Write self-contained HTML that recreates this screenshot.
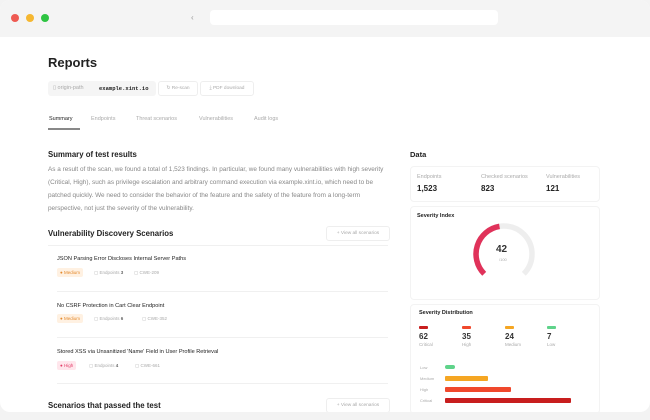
<!DOCTYPE html>
<html><head><meta charset="utf-8"><style>
*{box-sizing:border-box;margin:0;padding:0}
body{width:650px;height:420px;background:#f3f3f3;font-family:"Liberation Sans",sans-serif;position:relative;overflow:hidden;color:#222}
.a{position:absolute;white-space:nowrap}
.win{position:absolute;left:0;top:0;width:650px;height:412px;background:#fff;border-radius:10px;overflow:hidden}
.bar{position:absolute;left:0;top:0;width:650px;height:37px;background:#f4f4f4}
.dot{position:absolute;top:14px;width:8px;height:8px;border-radius:50%}
.g{color:#aaa}
.t{font-size:5.5px}
.tag{position:absolute;height:9px;font-size:4.5px;line-height:9px;padding:0 3px;border-radius:2px}
.line{position:absolute;height:1px;background:#f0f0f0}
.card{position:absolute;border:1px solid #f3f3f3;border-radius:4px}
.btn{position:absolute;border:1px solid #eee;border-radius:3px;font-size:4.8px;color:#aaa;line-height:13px;text-align:center}
</style></head><body>
<div class="win">
<div class="bar"></div>
<div class="dot" style="left:11px;background:#ee5a52"></div>
<div class="dot" style="left:26px;background:#f5b731"></div>
<div class="dot" style="left:41px;background:#2ec442"></div>
<div class="a" style="left:191px;top:13px;font-size:8px;color:#999">‹</div>
<div class="a" style="left:210px;top:10px;width:288px;height:15px;background:#fff;border-radius:4px"></div>

<div class="a" style="left:48px;top:55px;font-size:13px;font-weight:bold">Reports</div>
<div class="a" style="left:48px;top:81px;width:108px;height:15px;background:#f5f5f5;border-radius:3px"></div>
<div class="a t g" style="left:53px;top:85px">▯ origin-path</div>
<div class="a" style="left:99px;top:85px;font-size:5.5px;font-family:'Liberation Mono',monospace;font-weight:bold">example.xint.io</div>
<div class="btn" style="left:158px;top:81px;width:40px;height:15px">↻ Re-scan</div>
<div class="btn" style="left:200px;top:81px;width:54px;height:15px">⤓ PDF download</div>

<div class="a t" style="left:49px;top:116px">Summary</div>
<div class="a t g" style="left:91px;top:116px">Endpoints</div>
<div class="a t g" style="left:136px;top:116px">Threat scenarios</div>
<div class="a t g" style="left:199px;top:116px">Vulnerabilities</div>
<div class="a t g" style="left:254px;top:116px">Audit logs</div>
<div class="a" style="left:48px;top:128px;width:32px;height:1.5px;background:#888"></div>

<div class="a" style="left:48px;top:150px;font-size:7.8px;font-weight:bold">Summary of test results</div>
<div class="a" style="left:48px;top:163px;font-size:6.4px;line-height:13px;color:#888">As a result of the scan, we found a total of 1,523 findings. In particular, we found many vulnerabilities with high severity<br>(Critical, High), such as privilege escalation and arbitrary command execution via example.xint.io, which need to be<br>patched quickly. We need to consider the behavior of the feature and the safety of the feature from a long-term<br>perspective, not just the severity of the vulnerability.</div>

<div class="a" style="left:48px;top:229px;font-size:7.8px;font-weight:bold">Vulnerability Discovery Scenarios</div>
<div class="btn" style="left:326px;top:226px;width:64px;height:15px">+ View all scenarios</div>
<div class="line" style="left:48px;top:245px;width:340px"></div>

<div class="a" style="left:57px;top:256px;font-size:5.6px">JSON Parsing Error Discloses Internal Server Paths</div>
<div class="tag" style="left:57px;top:268px;background:#fff1e2;color:#e48a2d">● Medium</div>
<div class="a g" style="left:94px;top:270px;font-size:4.5px">▢ Endpoints <b style="color:#666">3</b></div>
<div class="a g" style="left:134px;top:270px;font-size:4.5px">▢ CWE-209</div>
<div class="line" style="left:57px;top:291px;width:331px"></div>

<div class="a" style="left:57px;top:303px;font-size:5.6px">No CSRF Protection in Cart Clear Endpoint</div>
<div class="tag" style="left:57px;top:314px;background:#fff1e2;color:#e48a2d">● Medium</div>
<div class="a g" style="left:94px;top:316px;font-size:4.5px">▢ Endpoints <b style="color:#666">6</b></div>
<div class="a g" style="left:142px;top:316px;font-size:4.5px">▢ CWE-352</div>
<div class="line" style="left:57px;top:337px;width:331px"></div>

<div class="a" style="left:57px;top:349px;font-size:5.6px">Stored XSS via Unsanitized 'Name' Field in User Profile Retrieval</div>
<div class="tag" style="left:57px;top:361px;background:#ffe6ec;color:#e33a66">● High</div>
<div class="a g" style="left:89px;top:363px;font-size:4.5px">▢ Endpoints <b style="color:#666">4</b></div>
<div class="a g" style="left:135px;top:363px;font-size:4.5px">▢ CWE-661</div>
<div class="line" style="left:57px;top:383px;width:331px"></div>

<div class="a" style="left:48px;top:401px;font-size:7.8px;font-weight:bold">Scenarios that passed the test</div>
<div class="btn" style="left:326px;top:398px;width:64px;height:15px">+ View all scenarios</div>

<div class="a" style="left:410px;top:150px;font-size:7.5px;font-weight:bold">Data</div>
<div class="card" style="left:410px;top:166px;width:190px;height:36px"></div>
<div class="a t g" style="left:417px;top:174px">Endpoints</div>
<div class="a" style="left:417px;top:184px;font-size:8px;font-weight:bold">1,523</div>
<div class="a t g" style="left:481px;top:174px">Checked scenarios</div>
<div class="a" style="left:481px;top:184px;font-size:8px;font-weight:bold">823</div>
<div class="a t g" style="left:546px;top:174px">Vulnerabilities</div>
<div class="a" style="left:546px;top:184px;font-size:8px;font-weight:bold">121</div>

<div class="card" style="left:410px;top:206px;width:190px;height:94px"></div>
<div class="a" style="left:417px;top:213px;font-size:5.5px;font-weight:bold">Severity Index</div>
<svg class="a" style="left:472px;top:222px" width="64" height="64" viewBox="0 0 64 64">
<path d="M12.2 51.8 A28 28 0 1 1 51.8 51.8" fill="none" stroke="#eee" stroke-width="5.5"/>
<path d="M12.2 51.8 A28 28 0 0 1 27.5 4.4" fill="none" stroke="#e0325a" stroke-width="5.5"/>
</svg>
<div class="a" style="left:496px;top:244px;font-size:10px;font-weight:bold;color:#333">42</div>
<div class="a g" style="left:499px;top:257px;font-size:4px">/100</div>

<div class="card" style="left:410px;top:304px;width:190px;height:110px"></div>
<div class="a" style="left:419px;top:310px;font-size:5.5px;font-weight:bold">Severity Distribution</div>
<div class="a" style="left:419px;top:326px;width:9px;height:3px;background:#c81e1e;border-radius:1px"></div>
<div class="a" style="left:462px;top:326px;width:9px;height:3px;background:#f0482c;border-radius:1px"></div>
<div class="a" style="left:505px;top:326px;width:9px;height:3px;background:#f5a623;border-radius:1px"></div>
<div class="a" style="left:547px;top:326px;width:9px;height:3px;background:#5fd38a;border-radius:1px"></div>
<div class="a" style="left:419px;top:332px;font-size:8px;font-weight:bold;color:#333">62</div>
<div class="a" style="left:462px;top:332px;font-size:8px;font-weight:bold;color:#333">35</div>
<div class="a" style="left:505px;top:332px;font-size:8px;font-weight:bold;color:#333">24</div>
<div class="a" style="left:547px;top:332px;font-size:8px;font-weight:bold;color:#333">7</div>
<div class="a g" style="left:419px;top:342px;font-size:4.5px">Critical</div>
<div class="a g" style="left:462px;top:342px;font-size:4.5px">High</div>
<div class="a g" style="left:505px;top:342px;font-size:4.5px">Medium</div>
<div class="a g" style="left:547px;top:342px;font-size:4.5px">Low</div>
<div class="a g" style="left:420px;top:365px;font-size:4px">Low</div>
<div class="a g" style="left:420px;top:376px;font-size:4px">Medium</div>
<div class="a g" style="left:420px;top:387px;font-size:4px">High</div>
<div class="a g" style="left:420px;top:398px;font-size:4px">Critical</div>
<div class="a" style="left:445px;top:365px;width:10px;height:4px;background:#5fd38a;border-radius:2px"></div>
<div class="a" style="left:445px;top:376px;width:43px;height:5px;background:#f5a623;border-radius:1px"></div>
<div class="a" style="left:445px;top:387px;width:66px;height:5px;background:#f0482c;border-radius:1px"></div>
<div class="a" style="left:445px;top:398px;width:126px;height:5px;background:#c81e1e;border-radius:1px"></div>
</div>
</body></html>
